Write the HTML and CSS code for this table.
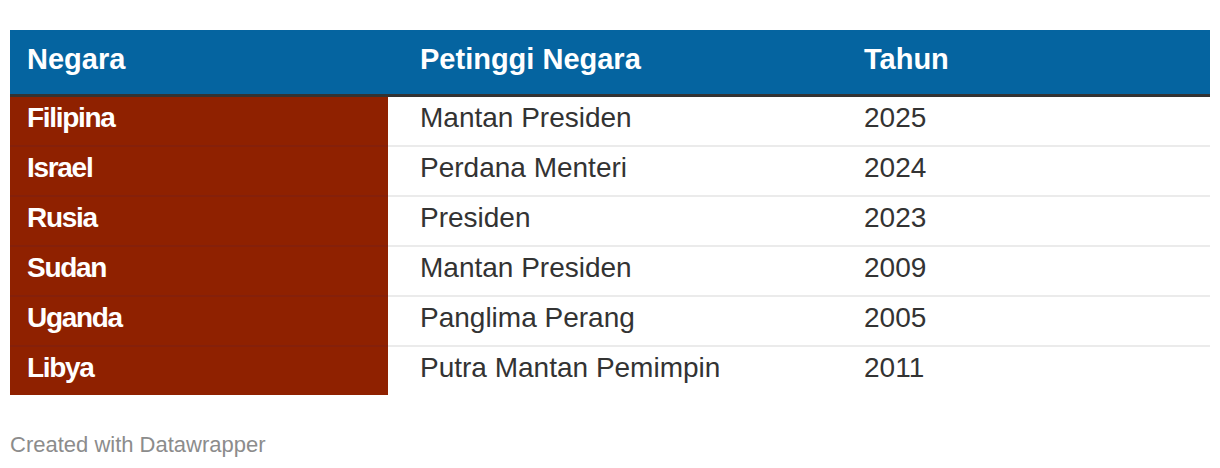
FILE: index.html
```html
<!DOCTYPE html>
<html lang="id">
<head>
<meta charset="utf-8">
<title>Tabel</title>
<link rel="stylesheet" href="styles.css">
</head>
<body>
<div class="chart">
  <div class="table">
    <div class="row head">
      <div class="cell c1">Negara</div>
      <div class="cell c2">Petinggi Negara</div>
      <div class="cell c3">Tahun</div>
    </div>
    <div class="row">
      <div class="cell c1">Filipina</div>
      <div class="cell c2">Mantan Presiden</div>
      <div class="cell c3">2025</div>
    </div>
    <div class="row">
      <div class="cell c1">Israel</div>
      <div class="cell c2">Perdana Menteri</div>
      <div class="cell c3">2024</div>
    </div>
    <div class="row">
      <div class="cell c1">Rusia</div>
      <div class="cell c2">Presiden</div>
      <div class="cell c3">2023</div>
    </div>
    <div class="row">
      <div class="cell c1">Sudan</div>
      <div class="cell c2">Mantan Presiden</div>
      <div class="cell c3">2009</div>
    </div>
    <div class="row">
      <div class="cell c1">Uganda</div>
      <div class="cell c2">Panglima Perang</div>
      <div class="cell c3">2005</div>
    </div>
    <div class="row last">
      <div class="cell c1">Libya</div>
      <div class="cell c2">Putra Mantan Pemimpin</div>
      <div class="cell c3">2011</div>
    </div>
  </div>
  <div class="footer">Created with Datawrapper</div>
</div>
</body>
</html>
```

FILE: styles.css
```css
html, body {
  margin: 0;
  padding: 0;
  background: #ffffff;
}

body {
  font-family: "Liberation Sans", Arial, Helvetica, sans-serif;
  color: #333333;
}

.chart {
  padding: 30px 10px 0 10px;
}

.table {
  display: flex;
  flex-direction: column;
}

.row {
  display: grid;
  grid-template-columns: 378px 466px 1fr;
}

.cell {
  font-size: 28px;
  line-height: 32px;
  padding: 5px 0 11px 0;
  border-bottom: 2px solid #ebebeb;
  white-space: nowrap;
}

.row.last .cell {
  border-bottom: none;
}

.c1 {
  padding-left: 17px;
  background: #8f2100;
  color: #ffffff;
  font-weight: bold;
  letter-spacing: -1.3px;
  border-bottom-color: #85200a;
}

.c2 {
  padding-left: 32px;
}

.c3 {
  padding-left: 10px;
}

.row.head {
  background: #0564a0;
  border-bottom: 3px solid #333333;
}

.row.head .cell {
  background: transparent;
  color: #ffffff;
  font-weight: bold;
  font-size: 29px;
  line-height: 33px;
  letter-spacing: 0;
  padding-top: 13px;
  padding-bottom: 18px;
  border-bottom: none;
}

.footer {
  margin-top: 37px;
  font-size: 22px;
  line-height: 25px;
  color: #8c8c8c;
}
```
